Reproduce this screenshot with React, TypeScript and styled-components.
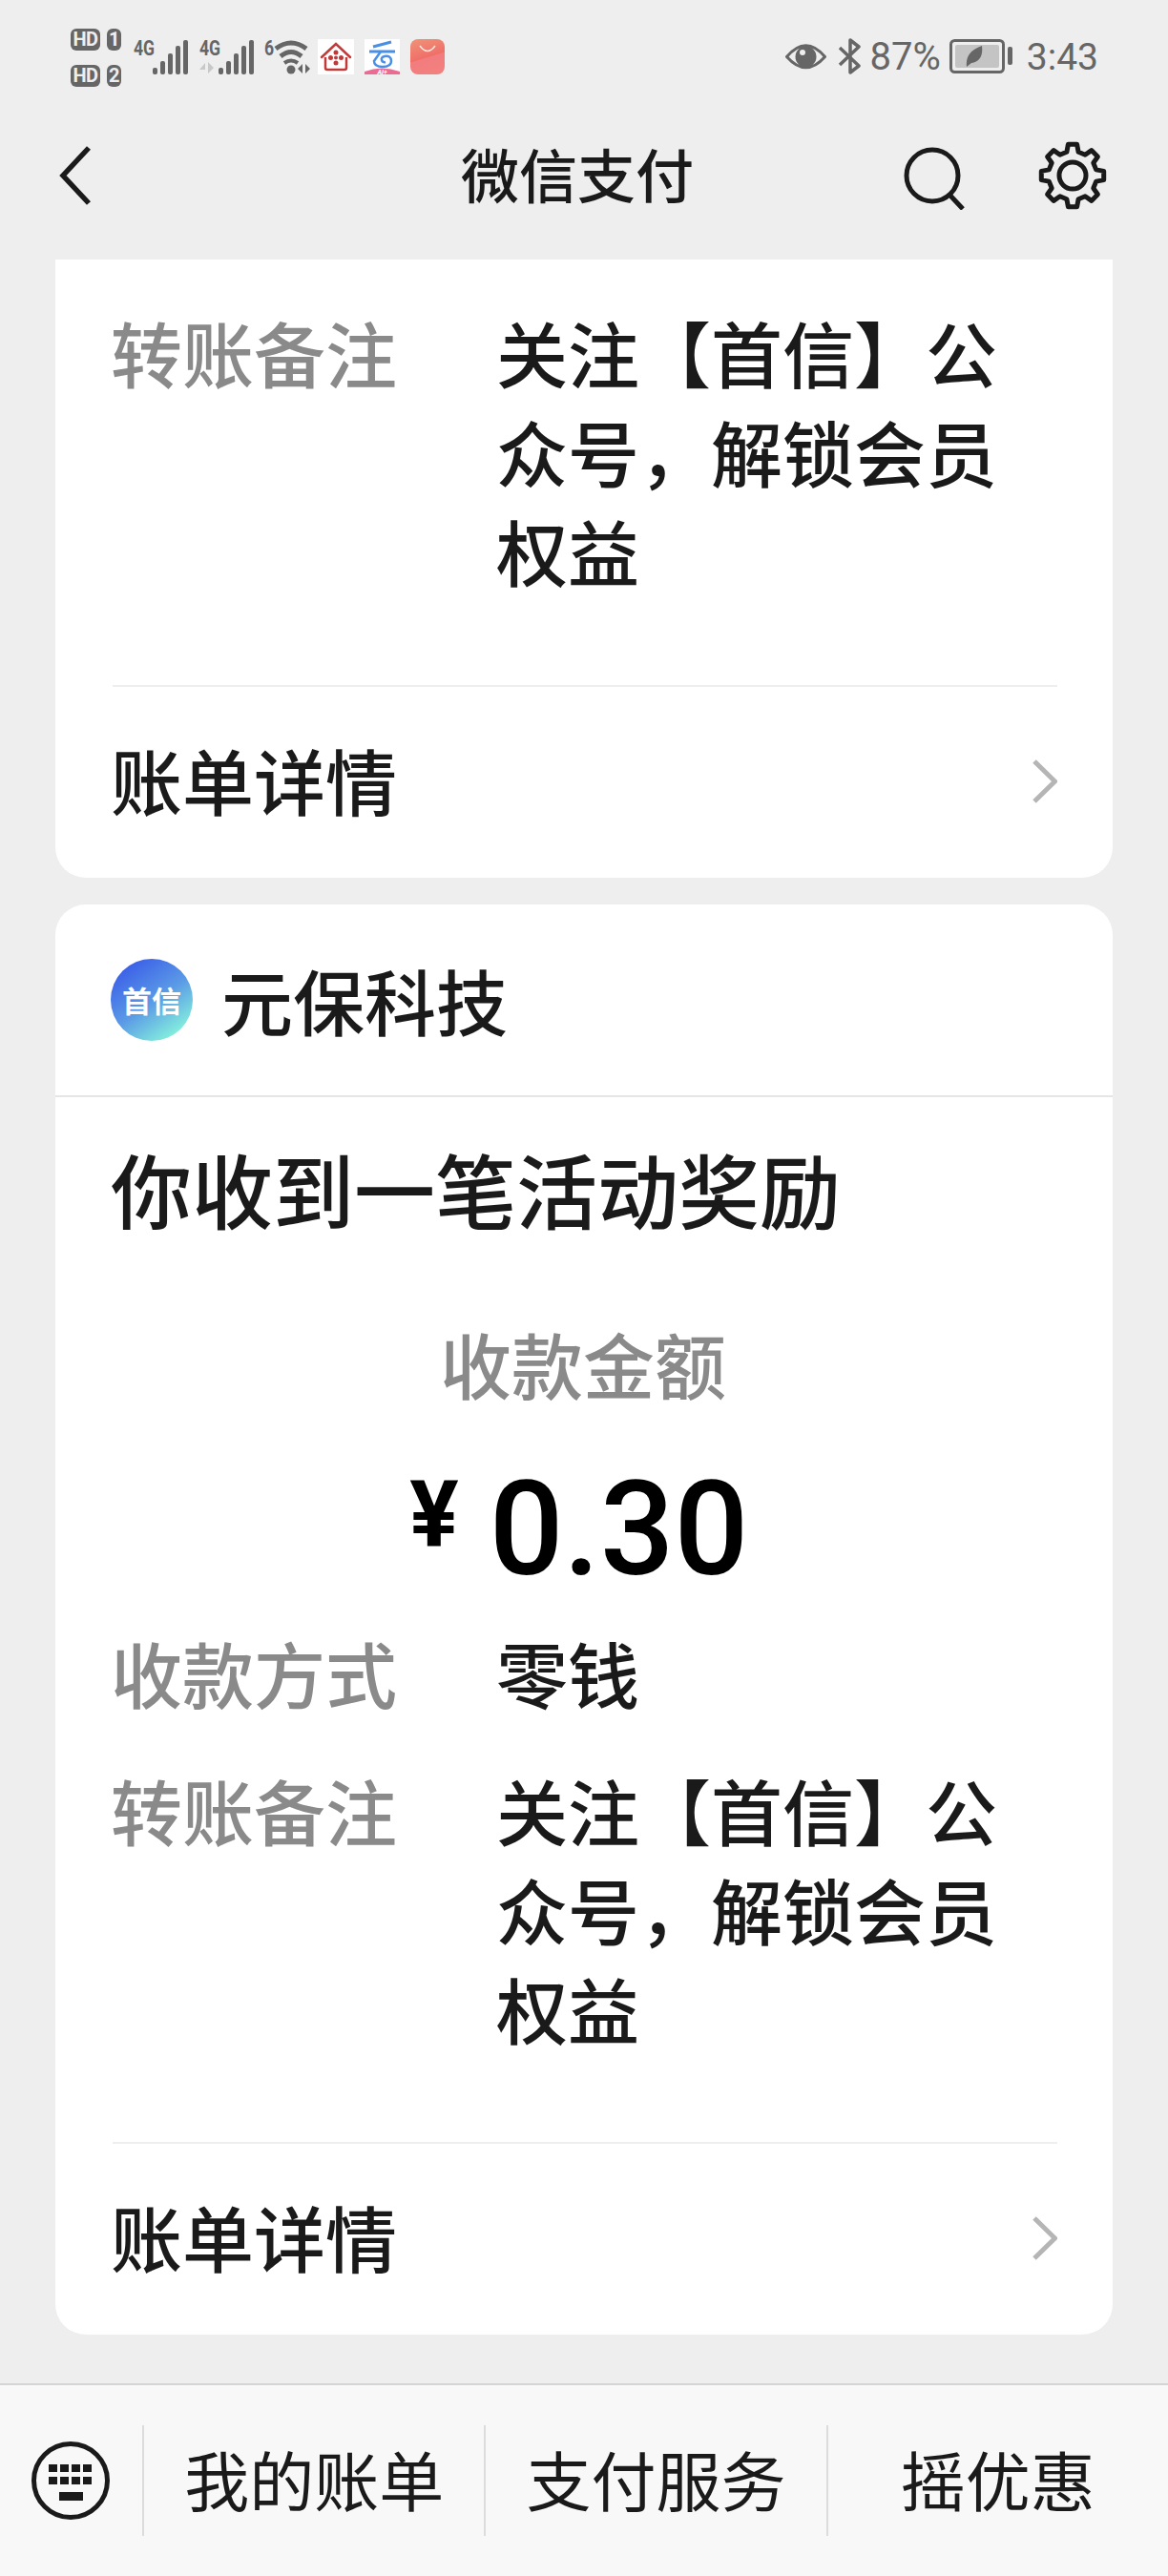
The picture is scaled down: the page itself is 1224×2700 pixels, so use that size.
import React from "react";
import styled, { createGlobalStyle } from "styled-components";

const GlobalStyle = createGlobalStyle`
  html, body {
    margin: 0;
    padding: 0;
    background: #eeeeee;
  }
  * {
    box-sizing: border-box;
  }
`;

const cjk = `"Noto Sans CJK SC", "Noto Sans", sans-serif`;

const Page = styled.div`
  width: 1224px;
  height: 2700px;
  display: flex;
  flex-direction: column;
  overflow: hidden;
  background: #eeeeee;
  font-family: ${cjk};
  font-weight: 500;
  color: #1a1a1a;
`;

const Top = styled.header`
  height: 272px;
  flex: none;
  display: flex;
  flex-direction: column;
`;

const StatusBar = styled.div`
  height: 110px;
  padding: 30px 73px 0 74px;
  display: flex;
  justify-content: space-between;
  align-items: flex-start;
  color: #666666;
`;

const StatusGroup = styled.div`
  display: flex;
  align-items: flex-start;
`;

const SimStack = styled.div`
  width: 53px;
  display: flex;
  flex-direction: column;
  gap: 15px;
`;

const SimRow = styled.div`
  display: flex;
  gap: 7px;
`;

const Badge = styled.span<{ $w: number }>`
  width: ${(p) => p.$w}px;
  height: 23px;
  border-radius: 6px;
  background: #666666;
  color: #eeeeee;
  font: 700 20px/23px "Roboto", sans-serif;
  letter-spacing: -0.5px;
  text-align: center;
`;

const Signal = styled.div<{ $ml: number }>`
  display: flex;
  align-items: flex-start;
  height: 37px;
  margin: 11px 0 0 ${(p) => p.$ml}px;
`;

const NetColumn = styled.div<{ $w: number }>`
  width: ${(p) => p.$w}px;
  height: 37px;
  display: flex;
  flex-direction: column;
  justify-content: space-between;
`;

const NetLabel = styled.span`
  display: block;
  font: 700 22px/20px "Roboto", sans-serif;
  white-space: nowrap;
  transform: scaleX(0.8);
  transform-origin: left;
`;

const SmallIcon = styled.svg<{ $ml: number; $mt?: number }>`
  display: block;
  flex: none;
  margin: ${(p) => p.$mt ?? 11}px 0 0 ${(p) => p.$ml}px;
`;

const StatusText = styled.span<{ $ml: number; $size: number }>`
  margin: 6px 0 0 ${(p) => p.$ml}px;
  font: 400 ${(p) => p.$size}px/48px "Roboto", sans-serif;
`;

const NavBar = styled.nav`
  flex: 1;
  position: relative;
  display: flex;
  align-items: center;
  justify-content: space-between;
  padding: 0 64px 14px 62px;
`;

const NavTitle = styled.h1`
  position: absolute;
  left: 0;
  right: 14px;
  top: 29px;
  margin: 0;
  text-align: center;
  font-size: 61px;
  line-height: 86px;
  font-weight: 500;
`;

const NavActions = styled.div`
  display: flex;
  align-items: center;
  gap: 77px;
`;

const NavIcon = styled.svg<{ $mt?: number }>`
  display: block;
  margin-top: ${(p) => p.$mt ?? 0}px;
`;

const Scroll = styled.main`
  flex: 1;
  padding: 0 58px;
  display: flex;
  flex-direction: column;
  gap: 28px;
  overflow: hidden;
`;

const Card = styled.section<{ $cut?: boolean }>`
  background: #ffffff;
  border-radius: ${(p) => (p.$cut ? "0 0 32px 32px" : "32px")};
  padding-top: ${(p) => (p.$cut ? "45px" : "0")};
`;

const CardHead = styled.div`
  height: 202px;
  padding: 0 58px;
  display: flex;
  align-items: center;
  gap: 30px;
  border-bottom: 2px solid #e5e5e5;
`;

const Logo = styled.div`
  width: 86px;
  height: 86px;
  border-radius: 50%;
  background: linear-gradient(145deg, #3b5fe8 12%, #5b9be6 52%, #85f2dc 88%);
  color: #ffffff;
  font-size: 31px;
  font-weight: 700;
  line-height: 86px;
  text-align: center;
`;

const Merchant = styled.span`
  font-size: 75px;
  line-height: 104px;
`;

const Body = styled.div<{ $top: number }>`
  padding: ${(p) => p.$top}px 60px 0 58px;
`;

const Headline = styled.h2`
  margin: 0 0 72px;
  font-size: 85px;
  line-height: 120px;
  font-weight: 500;
  white-space: nowrap;
`;

const AmountLabel = styled.div`
  text-align: center;
  font-size: 75px;
  line-height: 104px;
  color: #8a8a8a;
`;

const Amount = styled.div`
  margin: 27px 0 13px;
  height: 180px;
  display: flex;
  justify-content: center;
  color: #000000;
  font-family: "Roboto", sans-serif;
`;

const Yen = styled.span`
  font-size: 96px;
  font-weight: 700;
  line-height: 158px;
  margin-right: 32px;
`;

const Digits = styled.span`
  width: 280px;
  font-size: 137px;
  font-weight: 500;
  line-height: 190px;
  white-space: nowrap;
`;

const Fields = styled.div`
  display: flex;
  flex-direction: column;
  gap: 40px;
`;

const Field = styled.div`
  display: flex;
  font-size: 75px;
  line-height: 104px;
`;

const FieldKey = styled.span`
  flex: none;
  width: 404px;
  color: #8a8a8a;
`;

const FieldValue = styled.span`
  width: 530px;
`;

const DetailRow = styled.div<{ $top: number }>`
  margin: ${(p) => p.$top}px 58px 0 60px;
  height: 202px;
  padding-bottom: 8px;
  border-top: 2px solid #eeeeee;
  display: flex;
  align-items: center;
  justify-content: space-between;
  font-size: 75px;
`;

const DetailLabel = styled.span`
  margin-left: -2px;
`;

const ChevronIcon = styled.svg`
  display: block;
  margin-top: 6px;
`;

const Footer = styled.footer`
  height: 202px;
  flex: none;
  display: flex;
  align-items: center;
  background: #f8f8f8;
  border-top: 2px solid #d4d4d4;
`;

const KeyboardCell = styled.div`
  width: 149px;
  flex: none;
  padding: 0 0 0 33px;
`;

const Tab = styled.div`
  flex: 1;
  height: 116px;
  border-left: 2px solid #dcdcdc;
  font-size: 68px;
  font-weight: 400;
  line-height: 112px;
  text-align: center;
`;

function SignalBars() {
  const bars = [7, 14, 22, 30, 36];
  return (
    <svg width="37" height="37" viewBox="0 0 37 37" style={{ display: "block" }}>
      {bars.map((h, i) => (
        <rect key={i} x={i * 8} y={37 - h} width="5" height={h} rx="2" fill="#666" />
      ))}
    </svg>
  );
}

function Wifi() {
  return (
    <svg width="42" height="37" viewBox="0 0 42 37" fill="none" style={{ display: "block" }}>
      <path d="M3 10Q19-2 35 10" stroke="#666" strokeWidth="5" />
      <path d="M8 18Q19 9 30 18" stroke="#666" strokeWidth="5" />
      <path d="M12 25Q19 20 26 25" stroke="#666" strokeWidth="4" />
      <circle cx="19" cy="32" r="4.500" fill="#666" />
      <path d="M31 36V26l-5 5zM34 26v10l5-5z" fill="#666" />
    </svg>
  );
}

function Chevron() {
  return (
    <ChevronIcon width="26" height="46" viewBox="0 0 26 46" fill="none">
      <path d="M2 2 23.500 23 2 44" stroke="#b5b5b5" strokeWidth="5" />
    </ChevronIcon>
  );
}

function gearPath() {
  const cx = 36;
  const cy = 36;
  const pts: string[] = [];
  for (let i = 0; i < 8; i++) {
    const a = (i * Math.PI) / 4 - Math.PI / 2;
    const step = Math.PI / 8;
    const add = (r: number, t: number) =>
      pts.push(`${(cx + r * Math.cos(t)).toFixed(1)} ${(cy + r * Math.sin(t)).toFixed(1)}`);
    add(33, a - step * 0.36);
    add(33, a + step * 0.36);
    add(25.5, a + step * 0.62);
    add(25.5, a + step * 1.38);
  }
  return `M${pts.join("L")}Z`;
}

export default function App() {
  return (
    <Page>
      <GlobalStyle />
      <Top>
        <StatusBar>
          <StatusGroup>
            <SimStack>
              <SimRow>
                <Badge $w={31}>HD</Badge>
                <Badge $w={15}>1</Badge>
              </SimRow>
              <SimRow>
                <Badge $w={31}>HD</Badge>
                <Badge $w={15}>2</Badge>
              </SimRow>
            </SimStack>
            <Signal $ml={13}>
              <NetColumn $w={20}>
                <NetLabel>4G</NetLabel>
              </NetColumn>
              <SignalBars />
            </Signal>
            <Signal $ml={12}>
              <NetColumn $w={20}>
                <NetLabel>4G</NetLabel>
                <svg width="17" height="13" viewBox="0 0 17 13" style={{ display: "block" }}>
                  <path d="M6 13V1L0 8h6zM9 0v12l6-6z" fill="#c8c8c8" />
                </svg>
              </NetColumn>
              <SignalBars />
            </Signal>
            <Signal $ml={11}>
              <NetColumn $w={9}>
                <NetLabel>6</NetLabel>
              </NetColumn>
              <Wifi />
            </Signal>
            <SmallIcon $ml={5} width="38" height="37" viewBox="0 0 38 37">
              <rect width="38" height="37" fill="#fff" />
              <path d="M4 19 19 5 34 19" fill="none" stroke="#c13a3a" strokeWidth="2.500" strokeLinecap="round" />
              <path d="M8 19v11q0 2 2 2h18q2 0 2-2V19" fill="none" stroke="#c13a3a" strokeWidth="2.500" />
              <circle cx="19" cy="14" r="2.500" fill="#c13a3a" />
              <circle cx="13.500" cy="19.500" r="2.500" fill="#c13a3a" />
              <circle cx="24.500" cy="19.500" r="2.500" fill="#c13a3a" />
              <circle cx="19" cy="25" r="2.500" fill="#c13a3a" />
              <circle cx="19" cy="19.500" r="2" fill="#c13a3a" />
            </SmallIcon>
            <SmallIcon $ml={11} width="37" height="37" viewBox="0 0 37 37">
              <rect width="37" height="37" fill="#fff" />
              <path d="M9 8 28 3M5 13h27" stroke="#4a8fe6" strokeWidth="3" fill="none" />
              <path d="M17 13 10 23q0 6 9 6 9 0 9-6t-7-5q-4 1-3 4t4 2" stroke="#4a8fe6" strokeWidth="2.500" fill="none" />
              <path d="M0 37v-3q18-7 37 0v3z" fill="#ec6b93" />
              <text x="18.500" y="36.500" textAnchor="middle" fontFamily="Roboto" fontWeight="700" fontStyle="italic" fontSize="7" fill="#fff">AI+</text>
            </SmallIcon>
            <SmallIcon $ml={11} width="36" height="37" viewBox="0 0 36 37">
              <defs>
                <linearGradient id="bag" x1="0" y1="0" x2="0.3" y2="1">
                  <stop offset="0" stopColor="#ef9478" />
                  <stop offset="0.6" stopColor="#f06f68" />
                  <stop offset="0.62" stopColor="#f27c7e" />
                  <stop offset="1" stopColor="#f2807f" />
                </linearGradient>
              </defs>
              <rect width="36" height="37" rx="8" fill="url(#bag)" />
              <path d="M10 7q8 11 16 0" fill="none" stroke="#fbe7df" strokeWidth="1.500" />
            </SmallIcon>
          </StatusGroup>
          <StatusGroup>
            <SmallIcon $ml={0} width="43" height="37" viewBox="0 0 43 37" fill="none">
              <path d="M1.500 18.500Q21.500-5 41.500 18.500 21.500 41 1.500 18.500Z" stroke="#666" strokeWidth="3" />
              <circle cx="21.500" cy="18.500" r="11" fill="#666" />
              <circle cx="18" cy="14" r="3" fill="#eee" />
            </SmallIcon>
            <SmallIcon $ml={12} $mt={10} width="24" height="38" viewBox="0 0 24 38" fill="none">
              <path d="M2 10 22 29 13 36V2l9 7L2 28" stroke="#666" strokeWidth="3.500" strokeLinejoin="round" />
            </SmallIcon>
            <StatusText $ml={10} $size={40}>87%</StatusText>
            <SmallIcon $ml={9} width="66" height="36" viewBox="0 0 66 36" fill="none">
              <rect x="1.500" y="1.500" width="55" height="33" rx="4" stroke="#666" strokeWidth="3" />
              <rect x="6" y="6" width="46" height="24" rx="2" fill="#c4c4c4" />
              <path d="M18 29q-2-16 16-22 2 16-11 18z" fill="#666" />
              <rect x="61" y="8" width="5" height="19" rx="2" fill="#666" />
            </SmallIcon>
            <StatusText $ml={15} $size={39}>3:43</StatusText>
          </StatusGroup>
        </StatusBar>
        <NavBar>
          <svg width="34" height="62" viewBox="0 0 34 62" fill="none">
            <path d="M31 2 4 31 31 60" stroke="#1a1a1a" strokeWidth="5.500" />
          </svg>
          <NavTitle>微信支付</NavTitle>
          <NavActions>
            <NavIcon $mt={6} width="64" height="66" viewBox="0 0 64 66" fill="none">
              <circle cx="30" cy="30" r="27" stroke="#1a1a1a" strokeWidth="5" />
              <path d="M48 50 62 65" stroke="#1a1a1a" strokeWidth="5" />
            </NavIcon>
            <NavIcon width="72" height="72" viewBox="0 0 72 72" fill="none">
              <path d={gearPath()} stroke="#1a1a1a" strokeWidth="5" strokeLinejoin="round" />
              <circle cx="36" cy="36" r="14" stroke="#1a1a1a" strokeWidth="5" />
            </NavIcon>
          </NavActions>
        </NavBar>
      </Top>
      <Scroll>
        <Card $cut>
          <Body $top={0}>
            <Field>
              <FieldKey>转账备注</FieldKey>
              <FieldValue>关注【首信】公众号，解锁会员权益</FieldValue>
            </Field>
          </Body>
          <DetailRow $top={89}>
            <DetailLabel>账单详情</DetailLabel>
            <Chevron />
          </DetailRow>
        </Card>
        <Card>
          <CardHead>
            <Logo>首信</Logo>
            <Merchant>元保科技</Merchant>
          </CardHead>
          <Body $top={35}>
            <Headline>你收到一笔活动奖励</Headline>
            <AmountLabel>收款金额</AmountLabel>
            <Amount>
              <Yen>¥</Yen>
              <Digits>0.30</Digits>
            </Amount>
            <Fields>
              <Field>
                <FieldKey>收款方式</FieldKey>
                <FieldValue>零钱</FieldValue>
              </Field>
              <Field>
                <FieldKey>转账备注</FieldKey>
                <FieldValue>关注【首信】公众号，解锁会员权益</FieldValue>
              </Field>
            </Fields>
          </Body>
          <DetailRow $top={88}>
            <DetailLabel>账单详情</DetailLabel>
            <Chevron />
          </DetailRow>
        </Card>
      </Scroll>
      <Footer>
        <KeyboardCell>
          <svg width="82" height="82" viewBox="0 0 82 82" fill="none" style={{ display: "block" }}>
            <circle cx="41" cy="41" r="38.500" stroke="#1a1a1a" strokeWidth="5" />
            {[0, 1, 2, 3].map((i) => (
              <React.Fragment key={i}>
                <rect x={18 + i * 12} y="24" width="9" height="8" fill="#1a1a1a" />
                <rect x={18 + i * 12} y="37" width="9" height="8" fill="#1a1a1a" />
              </React.Fragment>
            ))}
            <rect x="29" y="53" width="25" height="9" fill="#1a1a1a" />
          </svg>
        </KeyboardCell>
        <Tab>我的账单</Tab>
        <Tab>支付服务</Tab>
        <Tab>摇优惠</Tab>
      </Footer>
    </Page>
  );
}
